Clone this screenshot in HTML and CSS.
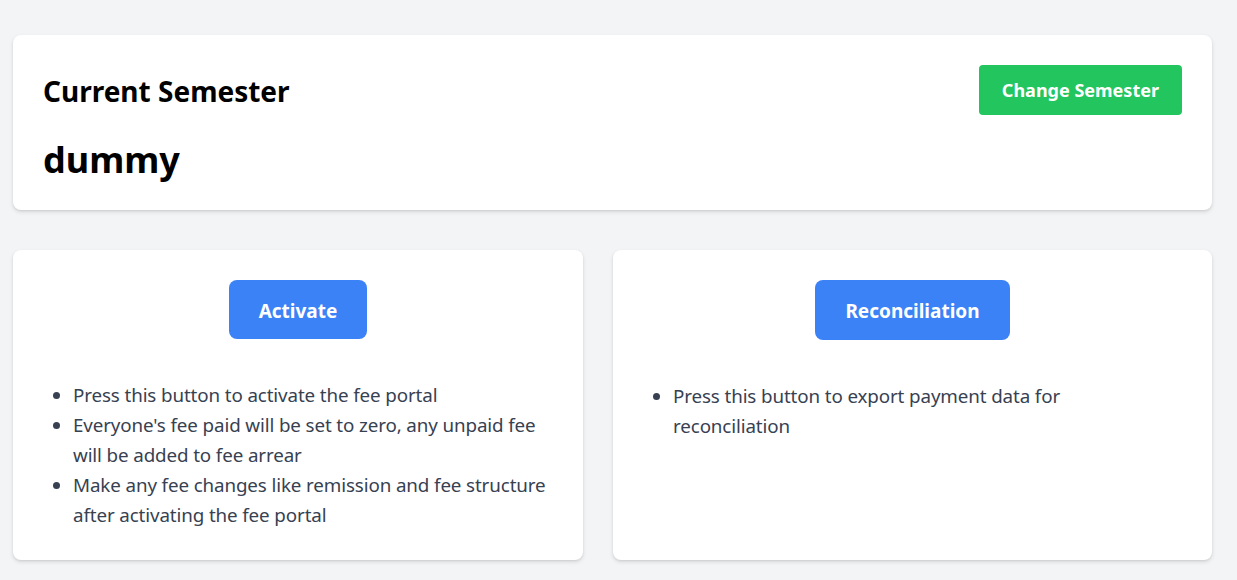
FILE: index.html
```html
<!DOCTYPE html>
<html>
<head>
<meta charset="utf-8">
<link rel="stylesheet" href="styles.css">
</head>
<body>
<main class="page">
  <section class="card semester">
    <div class="semester-head">
      <h2 class="semester-title">Current Semester</h2>
      <button class="btn btn-green">Change Semester</button>
    </div>
    <h1 class="semester-name">dummy</h1>
  </section>
  <div class="actions">
    <section class="card action">
      <button class="btn btn-blue">Activate</button>
      <ul class="notes">
        <li>Press this button to activate the fee portal</li>
        <li>Everyone's fee paid will be set to zero, any unpaid fee will be added to fee arrear</li>
        <li>Make any fee changes like remission and fee structure after activating the fee portal</li>
      </ul>
    </section>
    <section class="card action">
      <button class="btn btn-blue">Reconciliation</button>
      <ul class="notes notes-narrow">
        <li>Press this button to export payment data for reconciliation</li>
      </ul>
    </section>
  </div>
</main>
</body>
</html>
```

FILE: styles.css
```css
* { box-sizing: border-box; }
html, body { margin: 0; padding: 0; }
body {
  background: #f3f4f6;
  font-family: "Noto Sans", "Open Sans", sans-serif;
  color: #000;
}
.page {
  padding: 35px 25px 20px 13px;
  display: flex;
  flex-direction: column;
  gap: 40px;
}
.card {
  background: #fff;
  border-radius: 8px;
  box-shadow: 0 2px 4px rgba(0,0,0,0.12), 0 1px 2px rgba(0,0,0,0.06);
  padding: 30px;
}
.semester { height: 175px; }
.semester-head {
  display: flex;
  justify-content: space-between;
  align-items: center;
  height: 50px;
}
.semester-title {
  margin: 0;
  padding-top: 2px;
  font-size: 28px;
  font-weight: 700;
}
.semester-name {
  margin: 20px 0 0;
  font-size: 36px;
  font-weight: 700;
  line-height: 50px;
}
.btn {
  font-family: inherit;
  border: 0;
  color: #fff;
  font-weight: 700;
  cursor: pointer;
}
.btn-green {
  background: #22c55e;
  border-radius: 4px;
  height: 50px;
  padding: 0 23px;
  font-size: 18px;
}
.btn-blue {
  background: #3b82f6;
  border-radius: 8px;
  height: 60px;
  padding: 2px 30px 0;
  font-size: 19px;
}
.actions {
  display: grid;
  grid-template-columns: 570px 1fr;
  gap: 30px;
}
.action {
  height: 310px;
  display: flex;
  flex-direction: column;
  align-items: center;
}
.notes {
  align-self: stretch;
  margin: 41px 0 0;
  padding-left: 30px;
  color: #374151;
  font-size: 18.8px;
  letter-spacing: -0.12px;
  line-height: 30px;
}
.notes-narrow { max-width: 470px; }
```
